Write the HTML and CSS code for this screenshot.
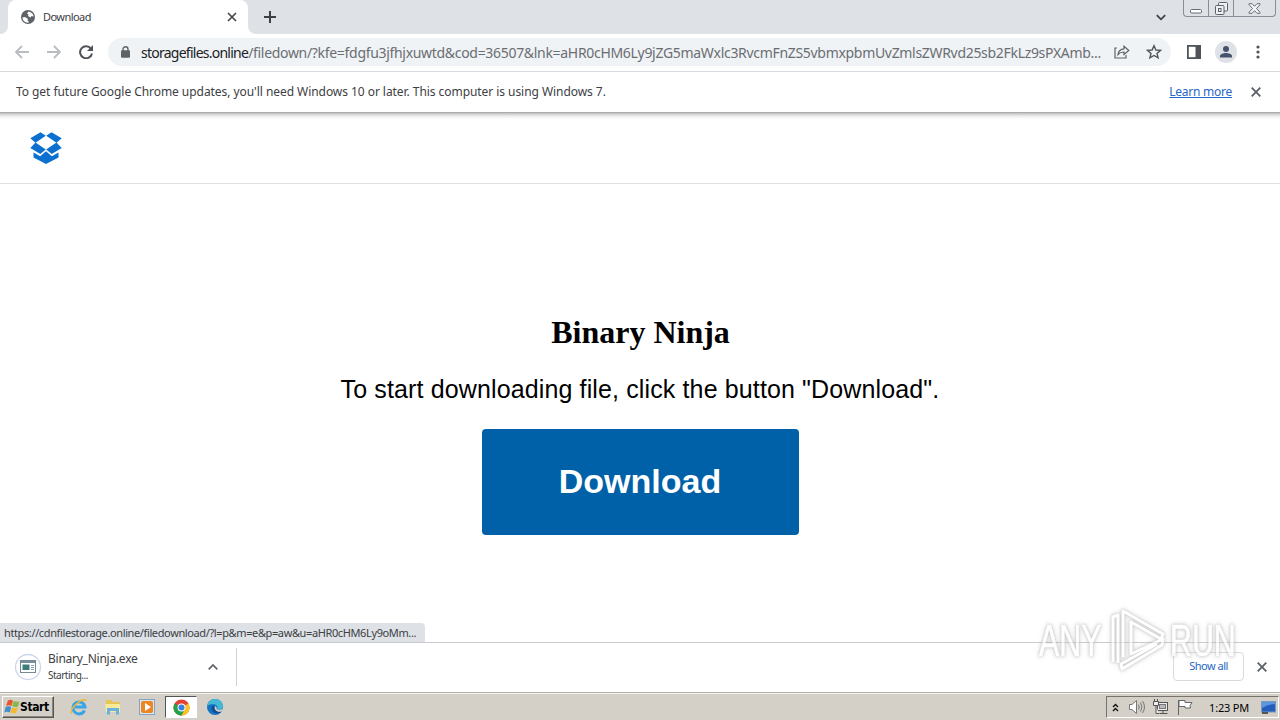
FILE: index.html
```
<!DOCTYPE html>
<html lang="en">
<head>
    <meta charset="UTF-8">
    <meta name="viewport" content="width=device-width, initial-scale=1.0">
    <title>Download</title>
    <link rel="stylesheet" href="styles.css">
</head>
<body>
<div class="window">
    <div class="tabstrip">
        <div class="tab-edge left"></div>
        <div class="tab">
            <svg width="14" height="14" viewBox="0 0 14 14"><circle cx="7" cy="7" r="7" fill="#5f6368"/><path d="M1.5 7.5 4 7l3 2-.5 1.5L8 12l-1 .7C4 12.500 1.500 10.500 1.500 7.500zM7.500 1.500 6 3.500l1.500 1L7 6l2.500 1.500 1-1.500 2 .5C12.500 4 10.500 2 7.500 1.500z" fill="#fff"/></svg>
            <span class="tab-title">Download</span>
            <svg width="10" height="10" viewBox="0 0 10 10"><path d="M1 1l8 8M9 1L1 9" stroke="#45494d" stroke-width="1.700"/></svg>
        </div>
        <div class="tab-edge right"></div>
        <svg class="new-tab" width="12" height="12" viewBox="0 0 12 12"><path d="M6 0v12M0 6h12" stroke="#3c4043" stroke-width="2"/></svg>
        <svg class="tab-search" width="10" height="7" viewBox="0 0 10 7"><path d="M.8 1.200 5 5.300 9.200 1.200" fill="none" stroke="#3c4043" stroke-width="1.800"/></svg>
        <div class="caption">
            <span class="min"><svg width="12" height="5" viewBox="0 0 12 5"><rect x=".5" y=".5" width="11" height="3.500" rx="1" fill="#fff" stroke="#666b76"/></svg></span>
            <span class="max"><svg width="13" height="13" viewBox="0 0 13 13" fill="#eef0f4" stroke="#5c616b"><rect x="3.500" y=".5" width="9" height="8.500" rx="1"/><rect x=".5" y="3.500" width="8.500" height="9" rx="1"/><rect x="3.500" y="6.500" width="2.500" height="3"/></svg></span>
            <span class="close"><svg width="13" height="11" viewBox="0 0 13 11"><path d="M1 .7h3l2.500 2.600L9 .7h3v1L8.500 5.500 12 9.300v1H9L6.500 7.700 4 10.300H1v-1l3.500-3.800L1 1.700z" fill="#f3f4f7" stroke="#686d76"/></svg></span>
        </div>
    </div>

    <div class="toolbar">
        <svg class="back" width="14" height="14" viewBox="0 0 14 14"><path d="M14 7H1.500M7 1 1 7l6 6" fill="none" stroke="#b9bcc0" stroke-width="1.800"/></svg>
        <svg class="forward" width="14" height="14" viewBox="0 0 14 14"><path d="M0 7h12.500M7 1l6 6-6 6" fill="none" stroke="#b9bcc0" stroke-width="1.800"/></svg>
        <svg class="reload" width="14" height="14" viewBox="0 0 14 14"><path d="M12 3.800A6 6 0 1 0 13 8.500" fill="none" stroke="#505458" stroke-width="2"/><path d="M14 0v6H8z" fill="#505458"/></svg>
        <div class="omnibox">
            <svg class="lock" width="9" height="12" viewBox="0 0 9 12"><path d="M2 5V3.200a2.500 2.500 0 0 1 5 0V5" fill="none" stroke="#5f6368" stroke-width="1.400"/><rect y="4.300" width="9" height="7.500" rx="1" fill="#5f6368"/></svg>
            <div class="url"><span class="host">storagefiles.online</span><span class="path">/filedown/?kfe=fdgfu3jfhjxuwtd&amp;cod=36507&amp;lnk=aHR0cHM6Ly9jZG5maWxlc3RvcmFnZS5vbmxpbmUvZmlsZWRvd25sb2FkLz9sPXAmb...</span></div>
            <svg class="share" width="16" height="14" viewBox="0 0 16 14" fill="none" stroke="#5f6368" stroke-width="1.200"><path d="M3 3H1v10h11v-3"/><path d="M4 9.500C4.500 6 6.500 4 10 3.800V1.200L14.800 5.500 10 9.500V7C7.500 7 5.500 7.700 4 9.500z"/></svg>
            <svg class="star" width="16" height="16" viewBox="0 0 16 16"><path d="M8 1.700 9.900 6l4.600.4-3.500 3 1.100 4.500L8 11.500l-4.100 2.400L5 9.400l-3.500-3L6.100 6z" fill="none" stroke="#505458" stroke-width="1.400"/></svg>
        </div>
        <svg class="panel" width="14" height="14" viewBox="0 0 14 14"><rect x=".9" y=".9" width="12.200" height="12.200" fill="none" stroke="#505458" stroke-width="1.800"/><path d="M8.500 1H14v12H8.500z" fill="#505458"/></svg>
        <svg class="avatar" width="22" height="22" viewBox="0 0 22 22"><circle cx="11" cy="11" r="11" fill="#dee1e6"/><circle cx="11" cy="8" r="3" fill="#46536d"/><path d="M5 16.500v-1.600c0-2 3.500-3 6-3s6 1 6 3v1.600z" fill="#46536d"/></svg>
        <svg class="menu" width="4" height="14" viewBox="0 0 4 14" fill="#505458"><circle cx="2" cy="2" r="1.600"/><circle cx="2" cy="7" r="1.600"/><circle cx="2" cy="12" r="1.600"/></svg>
    </div>

    <div class="infobar">
        <span class="message">To get future Google Chrome updates, you'll need Windows 10 or later. This computer is using Windows 7.</span>
        <a class="learn" href="#">Learn more</a>
        <svg width="10" height="10" viewBox="0 0 10 10"><path d="M.7.700l8.600 8.600M9.300.700L.7 9.300" stroke="#5f6368" stroke-width="1.900"/></svg>
    </div>

    <div class="page">
        <div class="page-header">
            <svg class="logo" width="32" height="32" viewBox="0 0 32 32" fill="#0b70d0"><path d="M10.500.2 15.800 3.800 5.500 10.800.3 6.200zM21.500.2 31.700 6.200l-5.200 4.600L16.200 3.800zM5.500 10.400l10.300 7.100-5.500 4.500L.3 16zM26.500 10.400l5.200 5.600-10 6-5.500-4.500z"/><path d="M3.500 20.500 10.200 24.300 16 19.300 21.800 24.300l6.700-3.800v5L16 32 3.500 25.500z"/></svg>
        </div>
        <div class="content">
            <h1>Binary Ninja</h1>
            <p>To start downloading file, click the button "Download".</p>
            <a class="download" href="#">Download</a>
        </div>
        <div class="status">https://cdnfilestorage.online/filedownload/?l=p&amp;m=e&amp;p=aw&amp;u=aHR0cHM6Ly9oMm...</div>
    </div>

    <div class="shelf">
        <div class="file">
            <svg width="28" height="28" viewBox="0 0 28 28"><circle cx="14" cy="14" r="12.500" fill="#fff" stroke="#cbd6ee" stroke-width="1.300"/><rect x="6.500" y="7.500" width="15" height="12" fill="#fff" stroke="#788b95"/><path d="M7 8h14v2H7z" fill="#77909e"/><path d="M8.500 11.500h7v5.500h-7z" fill="#3d7d78"/><path d="M17 12.500h3M17 14.500h3M17 16.500h3" stroke="#89a3b5"/></svg>
            <div class="file-text">
                <span class="file-name">Binary_Ninja.exe</span>
                <span class="file-state">Starting...</span>
            </div>
            <svg class="up" width="10" height="6" viewBox="0 0 10 6"><path d="M.7 5.300 5 1l4.300 4.300" fill="none" stroke="#5f6368" stroke-width="1.700"/></svg>
        </div>
        <span class="show-all">Show all</span>
        <svg width="10" height="10" viewBox="0 0 10 10"><path d="M.7.700l8.600 8.600M9.300.700L.7 9.300" stroke="#5f6368" stroke-width="1.900"/></svg>
    </div>

    <div class="taskbar">
        <div class="start">
            <svg width="16" height="16" viewBox="0 0 16 16"><path d="M4 1.500Q6.500 0 9 1.700L7.500 7Q5 5.500 2 7z" fill="#e6572d"/><path d="M9.800 2q2.700 1.500 5.700.2L14 7.500q-2.700 1.300-5.700-.2z" fill="#83b947"/><path d="M1.700 8q2.800-1.400 5.500.1L5.800 13.500Q3.100 12 .3 13.400z" fill="#438dd0"/><path d="M8 8.400q2.700 1.500 5.700.2l-1.400 5.200q-2.700 1.300-5.700-.2z" fill="#f4b928"/></svg>
            <span>Start</span>
        </div>
        <div class="apps">
            <span class="app"><svg width="18" height="18" viewBox="0 0 18 18"><path d="M14.500 12.500A6 6 0 1 1 15 9H5" fill="none" stroke="#3aa4e6" stroke-width="3"/><path d="M1.500 15.500C-1 11 12-1 16.500 2.500" fill="none" stroke="#eeb92d" stroke-width="1.500"/></svg></span>
            <span class="app"><svg width="16" height="16" viewBox="0 0 16 16"><path d="M1 1h6l1 2h7v10H1z" fill="#e8c557"/><path d="M0 5h15v8H1z" fill="#f9e99b"/><path d="M2 9h12v6.500h-3V12H5v3.500H2z" fill="#69b3de"/></svg></span>
            <span class="app"><svg width="16" height="16" viewBox="0 0 16 16"><rect x=".5" y=".5" width="15" height="15" fill="#d6e8f5" stroke="#87a5ba"/><rect x="2" y="2" width="12" height="12" rx="2" fill="#ee8523"/><path d="M6 4v8l6-4z" fill="#fff"/></svg></span>
            <span class="app active"><svg width="17" height="17" viewBox="0 0 18 18"><circle cx="9" cy="9" r="8.500" fill="#e34335"/><path d="M9 9 16.400 4.800A8.500 8.500 0 0 1 9 17.500z" fill="#fcc31e"/><path d="M1.600 4.800A8.500 8.500 0 0 0 9 17.500L12.500 11 9 9z" fill="#25a04b"/><circle cx="9" cy="9" r="4.200" fill="#fff"/><circle cx="9" cy="9" r="3.200" fill="#3b7de8"/></svg></span>
            <span class="app"><svg width="16" height="16" viewBox="0 0 16 16"><circle cx="8" cy="8" r="8" fill="#1474c4"/><path d="M.3 7C1 3 4 0 8 0c5 0 8 3.500 8 7 0 3-3 4-6 3.300 1-2 0-4.800-3-5C4.200 5 1.500 5.500.3 7z" fill="#44b9d4"/><path d="M6 6C3 9 5 14 10 14.500c2 0 3.500-.7 4.500-2C12 13.500 8.500 12 8.300 9z" fill="#134d92"/><path d="M8 7.200c1 0 2 1 1.700 3 2.300.9 4.500.5 6.300-.7-.4 1.500-1 2.500-1.600 3C10 14 6.500 10 8 7.200z" fill="#d6d0c8"/></svg></span>
        </div>
        <div class="tray">
            <svg class="chevrons" width="7" height="9" viewBox="0 0 7 9"><path d="M1 4l2.500-2.500L6 4M1 8l2.500-2.500L6 8" fill="none" stroke="#111" stroke-width="1.400"/></svg>
            <svg class="sound" width="16" height="16" viewBox="0 0 16 16" fill="none" stroke="#777"><path d="M.5 5.500H3L7.500 1.500v13L3 10.500H.5z" fill="#fff"/><path d="M9.500 5.500q1.500 2.500 0 5M11.500 3.500q3 4.500 0 9M13.500 2q4 6 0 12"/></svg>
            <svg class="network" width="16" height="16" viewBox="0 0 16 16" fill="#eee" stroke="#555"><rect x="4.500" y="3.500" width="10" height="8"/><rect x="6.500" y="5.500" width="6" height="4" fill="#bbb" stroke="#777"/><path d="M6.500 14.500h8M10 12v2M.5 2.500h5v4h-5zM1.500 0v2M4.500 0v2M3 7v7.500h3"/></svg>
            <svg class="flag" width="16" height="16" viewBox="0 0 16 16" fill="#fff" stroke="#666"><path d="M1.500 1v15M2 1.500h6v2h7l-2 3 .5 2.500H8V7.500H2z"/></svg>
            <span class="clock">1:23 PM</span>
            <svg class="desktop" width="15" height="13" viewBox="0 0 15 13"><rect x=".5" y=".5" width="14" height="10.500" fill="#245dbd" stroke="#7998be"/><path d="M1 1h13v2Q7 3 1 7z" fill="#5b97df"/><path d="M1 12h6" stroke="#333" stroke-width="1.500"/></svg>
        </div>
    </div>

    <div class="watermark">
        <span class="any">ANY</span>
        <svg width="58" height="66" viewBox="0 0 58 66" fill="none" stroke="#fff" stroke-width="3" stroke-linejoin="round"><path d="M4 54V9l5-2v48M14 49V3l40 23-2 5-30-17v32l32-15-1 6-40 24-1-5 36-20"/></svg>
        <span class="run">RUN</span>
    </div>
</div>
</body>
</html>
```
FILE: styles.css
```
* {
    box-sizing: border-box;
}
body {
    margin: 0;
    font-family: "Noto Sans", "Open Sans", sans-serif;
    font-size: 12px;
    color: #3c4043;
    background: #fff;
}
svg {
    display: block;
    flex: none;
}
a {
    color: #2767c5;
}
.window {
    position: relative;
    display: flex;
    flex-direction: column;
    width: 1280px;
    height: 720px;
    overflow: hidden;
}

/* tabs */
.tabstrip {
    display: flex;
    height: 34px;
    background: #dee1e6;
}
.tab-edge {
    width: 8px;
    background: #fff;
}
.tab-edge::before {
    content: "";
    display: block;
    height: 34px;
    background: #dee1e6;
}
.tab-edge.left::before {
    border-bottom-right-radius: 8px;
}
.tab-edge.right::before {
    border-bottom-left-radius: 8px;
}
.tab {
    display: flex;
    align-items: center;
    width: 240px;
    padding: 0 11px 0 13px;
    background: #fff;
    border-radius: 8px 8px 0 0;
}
.tab-title {
    flex: 1;
    margin: -2px 0 0 8px;
    font-size: 11px;
    letter-spacing: -0.55px;
}
.new-tab {
    margin: 11px 0 0 8px;
}
.tab-search {
    margin: 14px 17px 0 auto;
}
.caption {
    display: flex;
    width: 93px;
    height: 17px;
    margin-right: 4px;
    border: 1px solid #888d98;
    border-top: 0;
    border-radius: 0 0 4px 4px;
}
.caption span {
    display: flex;
    justify-content: center;
    align-items: center;
    width: 25px;
    border-right: 1px solid #888d98;
}
.caption .min {
    padding-top: 6px;
}
.caption .close {
    flex: 1;
    border: 0;
}

/* toolbar */
.toolbar {
    display: flex;
    align-items: center;
    height: 38px;
    padding: 0 20px 1px 15px;
    border-bottom: 1px solid #d8dadd;
}
.forward {
    margin-left: 18px;
}
.reload {
    margin-left: 18px;
}
.omnibox {
    display: flex;
    align-items: center;
    width: 1063px;
    height: 28px;
    margin: 0 15px;
    padding: 0 9px 0 13px;
    border-radius: 14px;
    background: #f0f3f5;
}
.url {
    width: 964px;
    margin-left: 11px;
    padding-top: 1px;
    font-size: 14px;
    line-height: 20px;
    white-space: nowrap;
}
.host {
    color: #202124;
    letter-spacing: -0.75px;
}
.path {
    color: #6a6e73;
    letter-spacing: -0.31px;
}
.share {
    margin-left: 9px;
}
.star {
    margin-left: 16px;
}
.panel {
    margin-left: 1px;
}
.avatar {
    margin-left: 14px;
}
.menu {
    margin-left: auto;
}

/* update notice */
.infobar {
    display: flex;
    align-items: center;
    height: 41px;
    padding: 0 19px 0 16px;
    border-bottom: 1px solid #a9abac;
    font-size: 12px;
    white-space: nowrap;
}
.infobar .message {
    flex: 1;
    margin-top: -2px;
    letter-spacing: -0.055px;
}
.learn {
    margin: -2px 19px 0 0;
    letter-spacing: -0.25px;
}

/* page */
.page {
    position: relative;
    flex: 1;
}
.page-header {
    height: 71px;
    padding: 19px 30px 0;
    border-bottom: 1px solid #dfe0e1;
    background: linear-gradient(#bfc0c1, #ececec 3px, #fff 6px);
}
.content {
    display: flex;
    flex-direction: column;
    align-items: center;
    padding-top: 130px;
    color: #000;
}
h1 {
    margin: 0 0 0 1px;
    font: bold 32px/36px "Liberation Serif", serif;
}
p {
    margin: 24px 0 25px;
    font: 25px/30px "Liberation Sans", sans-serif;
    letter-spacing: 0.13px;
    white-space: nowrap;
}
.download {
    width: 317px;
    height: 106px;
    border-radius: 4px;
    background: #0061a8;
    color: #fff;
    font: bold 34px/105px "Liberation Sans", sans-serif;
    text-align: center;
    text-decoration: none;
}
.status {
    position: absolute;
    left: 0;
    bottom: 0;
    width: 425px;
    height: 19px;
    padding-left: 4px;
    border-top-right-radius: 4px;
    background: #dee1e6;
    font-size: 11px;
    line-height: 19px;
    letter-spacing: -0.38px;
    white-space: nowrap;
}

/* downloads */
.shelf {
    display: flex;
    align-items: center;
    height: 50px;
    padding: 0 13px 2px 0;
    border-top: 1px solid #c9cbcd;
    background: #fff;
}
.file {
    display: flex;
    align-items: center;
    width: 237px;
    height: 38px;
    margin-right: auto;
    padding: 0 18px 0 14px;
    border-right: 1px solid #cfd1d3;
}
.file-text {
    display: flex;
    flex-direction: column;
    margin-left: 6px;
}
.file-name {
    font-size: 12px;
    line-height: 17px;
    letter-spacing: -0.25px;
}
.file-state {
    font-size: 10px;
    line-height: 16px;
    letter-spacing: -0.5px;
}
.up {
    margin-left: auto;
}
.show-all {
    width: 71px;
    height: 29px;
    margin-right: 13px;
    border: 1px solid #d8dadd;
    border-radius: 4px;
    color: #2767c5;
    font-size: 11px;
    line-height: 26px;
    letter-spacing: -0.5px;
    text-align: center;
}

/* taskbar */
.taskbar {
    display: flex;
    align-items: center;
    height: 28px;
    padding: 1px 1px 0 2px;
    border-top: 1px solid #b5b1aa;
    background: #d4d0c8;
    box-shadow: inset 0 1px #f4f2ee;
}
.start {
    display: flex;
    align-items: center;
    width: 52px;
    height: 22px;
    padding-left: 1px;
    border: 1px solid;
    border-color: #fff #555 #555 #fff;
    box-shadow: inset -1px -1px #8c8880;
    color: #000;
    font: bold 12px "DejaVu Sans Condensed", sans-serif;
}
.start span {
    letter-spacing: -0.4px;
}
.apps {
    display: flex;
    margin-left: 9px;
}
.app {
    display: flex;
    justify-content: center;
    align-items: center;
    width: 32px;
    height: 22px;
    margin-right: 2px;
}
.app.active {
    border: 1px solid;
    border-color: #555 #fff #fff #555;
    background: #fff;
}
.tray {
    display: flex;
    align-items: center;
    width: 173px;
    height: 22px;
    margin-left: auto;
    padding: 0 2px 0 5px;
    border: 1px solid;
    border-color: #77736c #fff #fff #77736c;
    color: #000;
}
.sound {
    margin-left: 10px;
}
.network {
    margin-left: 8px;
}
.flag {
    margin-left: 8px;
}
.clock {
    margin-left: auto;
    font-size: 11px;
    letter-spacing: -0.2px;
}
.desktop {
    margin-left: 12px;
}

/* recorder mark laid over the desktop */
.watermark {
    position: absolute;
    left: 1039px;
    top: 608px;
    display: flex;
    align-items: center;
    width: 194px;
    height: 66px;
    opacity: 0.65;
    color: #fff;
    font: 44px/66px "Liberation Sans", sans-serif;
    -webkit-text-stroke: 0.6px #fff;
    filter: drop-shadow(0 0 1px #aaa) drop-shadow(0 0 2px #bbb);
}
.watermark span {
    display: inline-block;
    transform-origin: left center;
    transform: scaleX(0.69);
    white-space: nowrap;
}
.watermark .any {
    width: 70px;
}
.watermark .run {
    width: 62px;
    margin-left: 3px;
}
```
